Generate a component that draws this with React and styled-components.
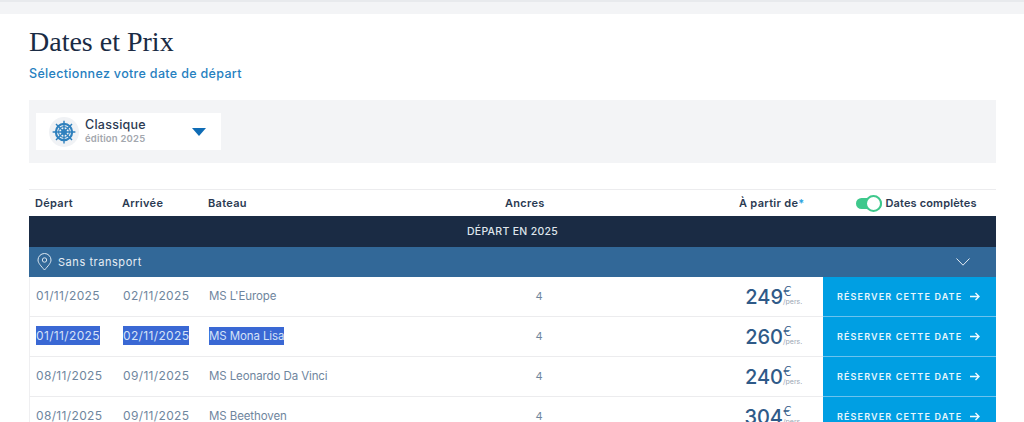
import React from "react";
import styled, { createGlobalStyle } from "styled-components";

const Global = createGlobalStyle`
  html, body { margin: 0; padding: 0; background: #fff; height: 422px; overflow: hidden; }
  body { font-family: "Inter", "Noto Sans", sans-serif; }
`;

const TopBand = styled.div`
  height: 12px;
  background: #f3f4f6;
  border-top: 2px solid #e8eaed;
`;
const Page = styled.main`
  padding: 0 28px 0 29px;
`;
const Title = styled.h1`
  margin: 0;
  padding-top: 12px;
  font-family: "Liberation Serif", serif;
  font-weight: 400;
  font-size: 28px;
  line-height: 32px;
  letter-spacing: 0;
  color: #1a2b44;
`;
const Subtitle = styled.p`
  margin: 8px 0 0;
  font-size: 12.5px;
  line-height: 16px;
  font-weight: 500;
  letter-spacing: 0.33px;
  color: #2680c0;
`;
const FilterBar = styled.section`
  margin-top: 18px;
  height: 63px;
  background: #f3f4f6;
  display: flex;
  align-items: center;
  padding-left: 7px;
`;
const Select = styled.div`
  width: 185px;
  height: 37px;
  background: #fff;
  display: flex;
  align-items: center;
  padding-left: 13px;
  box-sizing: border-box;
`;
const IconDisc = styled.div`
  width: 30px;
  height: 30px;
  border-radius: 50%;
  background: #f0f2f5;
  display: flex;
  align-items: center;
  justify-content: center;
  flex: none;
`;
const SelectText = styled.div`
  margin-left: 6px;
  width: 107px;
  padding-bottom: 2px;
`;
const SelectName = styled.div`
  font-size: 12.5px;
  line-height: 15px;
  font-weight: 500;
  letter-spacing: 0.25px;
  color: #2b3a52;
`;
const SelectEdition = styled.div`
  font-size: 9.5px;
  line-height: 12px;
  font-weight: 600;
  letter-spacing: 0.2px;
  color: #a3a7ae;
  margin-top: 1px;
`;
const Table = styled.section`
  margin-top: 26px;
  border-top: 1px solid #ececee;
`;
const HeaderRow = styled.div`
  height: 26px;
  display: flex;
  align-items: center;
  font-size: 11px;
  font-weight: 600;
  letter-spacing: 0.3px;
  color: #2b3a52;
  white-space: nowrap;
`;
const HeadCell = styled.div`
  width: ${(p) => p.$w}px;
  flex: none;
  padding-left: ${(p) => p.$pl || 0}px;
  box-sizing: border-box;
`;
const Star = styled.span`
  color: #2aa3e0;
`;
const Toggle = styled.div`
  width: 26px;
  height: 11px;
  border-radius: 6px;
  background: #3ec88c;
  position: relative;
  flex: none;
  margin-left: 52px;
  margin-right: 3px;
  &::after {
    content: "";
    position: absolute;
    right: 0;
    top: -3px;
    width: 13px;
    height: 13px;
    border-radius: 50%;
    background: #fff;
    border: 2px solid #3ec88c;
  }
`;
const CompleteLabel = styled.span`
  letter-spacing: 0.15px;
`;
const DarkBand = styled.div`
  height: 31px;
  background: #1a2b44;
  color: #dfe5ec;
  font-size: 10.5px;
  font-weight: 500;
  letter-spacing: 0.3px;
  display: flex;
  align-items: center;
  justify-content: center;
`;
const TransportBand = styled.div`
  height: 30px;
  background: #326898;
  color: #e6edf4;
  font-size: 11px;
  letter-spacing: 0.55px;
  display: flex;
  align-items: center;
  padding: 0 26px 0 8px;
  gap: 6px;
`;
const Grow = styled.div`
  flex: 1;
`;
const Row = styled.div`
  height: 39px;
  display: flex;
  align-items: center;
  border-left: 1px solid #efeff1;
  border-bottom: 1px solid #ececee;
  font-size: 11px;
  color: #6f869e;
  padding-left: 6px;
`;
const DateCell = styled.div`
  flex: none;
  width: ${(p) => p.$w}px;
  font-size: 12px;
  letter-spacing: 0.35px;
  padding-bottom: 2px;
`;
const BoatCell = styled.div`
  flex: none;
  width: 200px;
  font-size: 11.5px;
  letter-spacing: -0.1px;
  padding-bottom: 2px;
`;
const AnchorCell = styled.div`
  flex: none;
  width: 260px;
  text-align: center;
  padding-bottom: 2px;
`;
const Selected = styled.span`
  ${(p) => p.$on && "background: #3a68d4; color: #d5e2f7; padding: 2px 0; "}
`;
const Price = styled.div`
  flex: none;
  width: 154px;
  padding-right: 21px;
  box-sizing: border-box;
  display: flex;
  justify-content: flex-end;
  align-items: flex-start;
  color: #2f5a88;
`;
const Amount = styled.span`
  font-size: 20px;
  line-height: 24px;
  font-weight: 500;
`;
const PriceSide = styled.span`
  display: flex;
  flex-direction: column;
  width: 19px;
`;
const Euro = styled.span`
  font-size: 13px;
  line-height: 12px;
  font-weight: 300;
  color: #2f5a88;
`;
const Pers = styled.span`
  font-size: 7px;
  line-height: 9px;
  color: #9aa6b4;
`;
const BookButton = styled.button`
  flex: none;
  width: 173px;
  height: 40px;
  border: 0;
  border-bottom: 1px solid #6cc2ee;
  background: #009fe3;
  color: #e8f6fd;
  font-family: inherit;
  font-size: 9px;
  font-weight: 600;
  letter-spacing: 1.15px;
  display: flex;
  align-items: center;
  gap: 8px;
  padding: 0 0 0 14px;
  box-sizing: border-box;
  white-space: nowrap;
`;

const Wheel = () => (
  <svg width="26" height="26" viewBox="0 0 24 24" fill="none" stroke="#2f80bd" strokeWidth="1.4">
    <circle cx="12" cy="12" r="7.5" strokeWidth="2" />
    <circle cx="12" cy="12" r="5" strokeWidth="1" />
    <circle cx="12" cy="12" r="2" />
    <path d="M12 1.5v21M1.5 12h21M4.6 4.6l14.8 14.8M19.4 4.6L4.6 19.4" strokeWidth="1.3" />
  </svg>
);
const Caret = () => (
  <svg width="14" height="8" viewBox="0 0 14 8" style={{ flex: "none" }}>
    <path d="M0 0h14L7 8z" fill="#0f6cb5" />
  </svg>
);
const Pin = () => (
  <svg width="15" height="18" viewBox="0 0 15 18" fill="none" stroke="#dbe6f0" strokeWidth="1">
    <path d="M7.5 17C4 13 1 10 1 7a6.5 6.5 0 0 1 13 0c0 3-3 6-6.5 10z" />
    <circle cx="7.5" cy="7" r="2.2" />
  </svg>
);
const Chevron = () => (
  <svg width="14" height="8" viewBox="0 0 14 8" fill="none" stroke="#e6edf4" strokeWidth="1">
    <path d="M0.5 0.5L7 7.2l6.5-6.7" />
  </svg>
);
const Arrow = () => (
  <svg width="10" height="9" viewBox="0 0 10 9" fill="none" stroke="#f2fafe" strokeWidth="1.4">
    <path d="M0 4.5h9M5.5 1l3.5 3.5L5.5 8" />
  </svg>
);

const rows = [
  ["01/11/2025", "02/11/2025", "MS L'Europe", "249", false],
  ["01/11/2025", "02/11/2025", "MS Mona Lisa", "260", true],
  ["08/11/2025", "09/11/2025", "MS Leonardo Da Vinci", "240", false],
  ["08/11/2025", "09/11/2025", "MS Beethoven", "304", false],
];

export default function App() {
  return (
    <>
      <Global />
      <TopBand />
      <Page>
        <Title>Dates et Prix</Title>
        <Subtitle>Sélectionnez votre date de départ</Subtitle>
        <FilterBar>
          <Select>
            <IconDisc>
              <Wheel />
            </IconDisc>
            <SelectText>
              <SelectName>Classique</SelectName>
              <SelectEdition>édition 2025</SelectEdition>
            </SelectText>
            <Caret />
          </Select>
        </FilterBar>
        <Table>
          <HeaderRow>
            <HeadCell $w={93} $pl={6}>Départ</HeadCell>
            <HeadCell $w={86}>Arrivée</HeadCell>
            <HeadCell $w={297}>Bateau</HeadCell>
            <HeadCell $w={234}>Ancres</HeadCell>
            <span>
              À partir de<Star>*</Star>
            </span>
            <Toggle />
            <CompleteLabel>Dates complètes</CompleteLabel>
          </HeaderRow>
          <DarkBand>DÉPART EN 2025</DarkBand>
          <TransportBand>
            <Pin />
            Sans transport
            <Grow />
            <Chevron />
          </TransportBand>
          {rows.map(([from, to, boat, price, on], i) => (
            <Row key={i}>
              <DateCell $w={87}><Selected $on={on}>{from}</Selected></DateCell>
              <DateCell $w={86}><Selected $on={on}>{to}</Selected></DateCell>
              <BoatCell><Selected $on={on}>{boat}</Selected></BoatCell>
              <AnchorCell>4</AnchorCell>
              <Price>
                <Amount>{price}</Amount>
                <PriceSide>
                  <Euro>€</Euro>
                  <Pers>/pers.</Pers>
                </PriceSide>
              </Price>
              <BookButton>
                RÉSERVER CETTE DATE
                <Arrow />
              </BookButton>
            </Row>
          ))}
        </Table>
      </Page>
    </>
  );
}
